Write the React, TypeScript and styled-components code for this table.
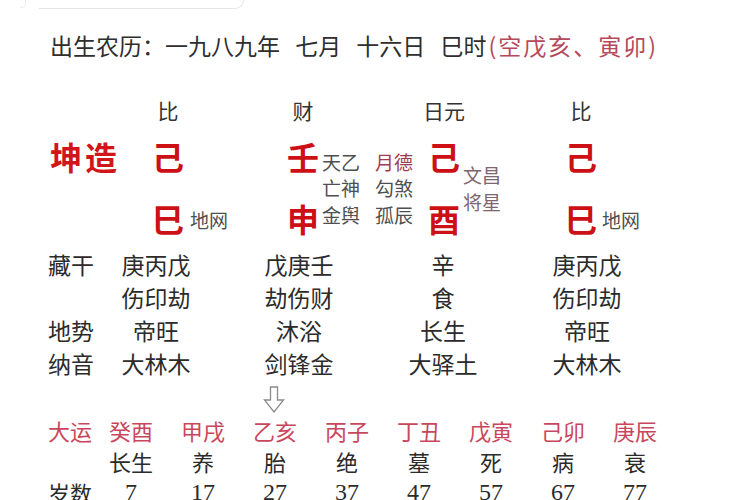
import React from "react";
import styled, { createGlobalStyle } from "styled-components";

const CJK = `"Noto Sans CJK SC", "Noto Sans CJK JP", sans-serif`;

const Global = createGlobalStyle`
  *, *::before, *::after { box-sizing: border-box; }
  html, body { margin: 0; padding: 0; background: #ffffff; }
  body { font-family: ${CJK}; color: #2b2b2b; }
`;

const Page = styled.div`
  width: 750px;
  height: 500px;
  overflow: hidden;
  background: #ffffff;
  display: flex;
  flex-direction: column;
`;

const TopEdge = styled.div`
  display: flex;
  align-items: flex-start;
  height: 10px;
  padding-left: 20px;
  gap: 13px;
`;

const EdgeTick = styled.div`
  width: 6px;
  height: 8px;
  border-right: 1px solid #ececec;
  border-bottom: 1px solid #ececec;
  border-bottom-right-radius: 5px;
`;

const EdgeBox = styled.div`
  width: 205px;
  height: 9px;
  border-bottom: 1px solid #e6e6e6;
  border-right: 1px solid #e6e6e6;
  border-bottom-right-radius: 9px;
`;

const Header = styled.div`
  margin-top: 24px;
  padding-left: 50px;
  font-size: 23px;
  line-height: 24px;
  word-spacing: 10px;
  white-space: pre;
  color: #2e2e2e;
`;

const Void = styled.span`
  color: #b5495b;
  word-spacing: 0;
  letter-spacing: 2px;
  margin-left: 2px;
`;

const Chart = styled.div`
  display: flex;
  margin-top: 38px;
  padding-left: 50px;
`;

const TitleCol = styled.div`
  width: 102px;
  flex: none;
  padding-top: 30px;
`;

const Title = styled.div`
  font-size: 32px;
  line-height: 62px;
  font-weight: 700;
  color: #d0161b;
  letter-spacing: 3px;
  white-space: nowrap;
`;

const Pillar = styled.div<{ $w?: number; $pl?: number }>`
  display: flex;
  flex-direction: column;
  flex: none;
  width: ${(p) => (p.$w ? `${p.$w}px` : "auto")};
  padding-left: ${(p) => p.$pl ?? 0}px;
`;

const Label = styled.div`
  width: 32px;
  height: 30px;
  display: flex;
  justify-content: center;
  align-items: center;
  font-size: 21px;
  white-space: nowrap;
  color: #333333;
`;

const Body = styled.div`
  display: flex;
`;

const Chars = styled.div`
  display: flex;
  flex-direction: column;
  width: 32px;
  flex: none;
`;

const Big = styled.div`
  height: 62px;
  display: flex;
  align-items: center;
  justify-content: center;
  font-size: 32px;
  font-weight: 700;
  line-height: 1;
  color: #cc1016;
`;

const NoteGroup = styled.div<{ $gap: number; $align: "center" | "end"; $mb?: number }>`
  display: flex;
  gap: 15px;
  align-self: ${(p) => (p.$align === "end" ? "flex-end" : "center")};
  margin-left: ${(p) => p.$gap}px;
  margin-bottom: ${(p) => p.$mb ?? 0}px;
  padding-top: ${(p) => (p.$align === "center" ? 3 : 0)}px;
`;

const NoteCol = styled.div`
  display: flex;
  flex-direction: column;
`;

const toneColor = { gray: "#4f4f4f", red: "#a33a4c", mauve: "#7d6670" } as const;

const Note = styled.div<{ $tone?: keyof typeof toneColor }>`
  font-size: 19px;
  line-height: 26.5px;
  white-space: nowrap;
  color: ${(p) => toneColor[p.$tone ?? "gray"]};
`;

const Table = styled.div`
  display: grid;
  grid-template-columns: 47px 122px 164px 124px 164px;
  padding-left: 48px;
  margin-top: -1px;
  font-size: 23px;
  line-height: 33px;
  color: #2b2b2b;
`;

const Cell = styled.div<{ $label?: boolean }>`
  text-align: ${(p) => (p.$label ? "left" : "center")};
  white-space: nowrap;
`;

const ArrowRow = styled.div`
  display: flex;
  padding-left: 263px;
  margin-top: 6px;
  height: 27px;
`;

const Luck = styled.div`
  display: grid;
  grid-template-columns: 47px repeat(8, 72px);
  padding-left: 48px;
  margin-top: 2px;
  font-size: 22px;
  line-height: 31px;
`;

const LuckCell = styled.div<{ $tone?: "pink" | "dark"; $label?: boolean; $num?: boolean }>`
  text-align: ${(p) => (p.$label ? "left" : "center")};
  white-space: nowrap;
  color: ${(p) => (p.$tone === "pink" ? "#c9475c" : "#2b2b2b")};
  font-family: ${(p) => (p.$num ? `"Liberation Serif", ${CJK}` : CJK)};
  font-size: ${(p) => (p.$num ? "24px" : "22px")};
`;

const DownArrow = () => (
  <svg width="22" height="27" viewBox="0 0 22 27">
    <path
      d="M7.5 1 H14.5 V14 H20.5 L11 26 L1.5 14 H7.5 Z"
      fill="none"
      stroke="#8a8a8a"
      strokeWidth="1.3"
      strokeLinejoin="miter"
    />
  </svg>
);

const tableRows: string[][] = [
  ["藏干", "庚丙戊", "戊庚壬", "辛", "庚丙戊"],
  ["", "伤印劫", "劫伤财", "食", "伤印劫"],
  ["地势", "帝旺", "沐浴", "长生", "帝旺"],
  ["纳音", "大林木", "剑锋金", "大驿土", "大林木"],
];

const luck = ["癸酉", "甲戌", "乙亥", "丙子", "丁丑", "戊寅", "己卯", "庚辰"];
const phase = ["长生", "养", "胎", "绝", "墓", "死", "病", "衰"];
const ages = ["7", "17", "27", "37", "47", "57", "67", "77"];

export default function App() {
  return (
    <>
      <Global />
      <Page>
        <TopEdge>
          <EdgeTick />
          <EdgeBox />
        </TopEdge>
        <Header>
          出生农历：一九八九年 七月 十六日 巳时<Void>(空戊亥、寅卯)</Void>
        </Header>

        <Chart>
          <TitleCol>
            <Title>坤造</Title>
          </TitleCol>

          <Pillar $w={135}>
            <Label>比</Label>
            <Body>
              <Chars>
                <Big>己</Big>
                <Big>巳</Big>
              </Chars>
              <NoteGroup $gap={6} $align="end" $mb={16}>
                <NoteCol>
                  <Note>地网</Note>
                </NoteCol>
              </NoteGroup>
            </Body>
          </Pillar>

          <Pillar $w={138}>
            <Label>财</Label>
            <Body>
              <Chars>
                <Big>壬</Big>
                <Big>申</Big>
              </Chars>
              <NoteGroup $gap={3} $align="center">
                <NoteCol>
                  <Note>天乙</Note>
                  <Note>亡神</Note>
                  <Note>金舆</Note>
                </NoteCol>
                <NoteCol>
                  <Note $tone="red">月德</Note>
                  <Note>勾煞</Note>
                  <Note>孤辰</Note>
                </NoteCol>
              </NoteGroup>
            </Body>
          </Pillar>

          <Pillar $w={138} $pl={3}>
            <Label>日元</Label>
            <Body>
              <Chars>
                <Big>己</Big>
                <Big>酉</Big>
              </Chars>
              <NoteGroup $gap={3} $align="center">
                <NoteCol>
                  <Note $tone="mauve">文昌</Note>
                  <Note $tone="mauve">将星</Note>
                </NoteCol>
              </NoteGroup>
            </Body>
          </Pillar>

          <Pillar $pl={2}>
            <Label>比</Label>
            <Body>
              <Chars>
                <Big>己</Big>
                <Big>巳</Big>
              </Chars>
              <NoteGroup $gap={5} $align="end" $mb={16}>
                <NoteCol>
                  <Note>地网</Note>
                </NoteCol>
              </NoteGroup>
            </Body>
          </Pillar>
        </Chart>

        <Table>
          {tableRows.map((row, r) =>
            row.map((c, i) => (
              <Cell key={`${r}-${i}`} $label={i === 0}>
                {c}
              </Cell>
            ))
          )}
        </Table>

        <ArrowRow>
          <DownArrow />
        </ArrowRow>

        <Luck>
          <LuckCell $label $tone="pink">大运</LuckCell>
          {luck.map((s) => (
            <LuckCell key={s} $tone="pink">{s}</LuckCell>
          ))}
          <LuckCell $label />
          {phase.map((s) => (
            <LuckCell key={s}>{s}</LuckCell>
          ))}
          <LuckCell $label>岁数</LuckCell>
          {ages.map((s) => (
            <LuckCell key={s} $num>{s}</LuckCell>
          ))}
        </Luck>
      </Page>
    </>
  );
}
